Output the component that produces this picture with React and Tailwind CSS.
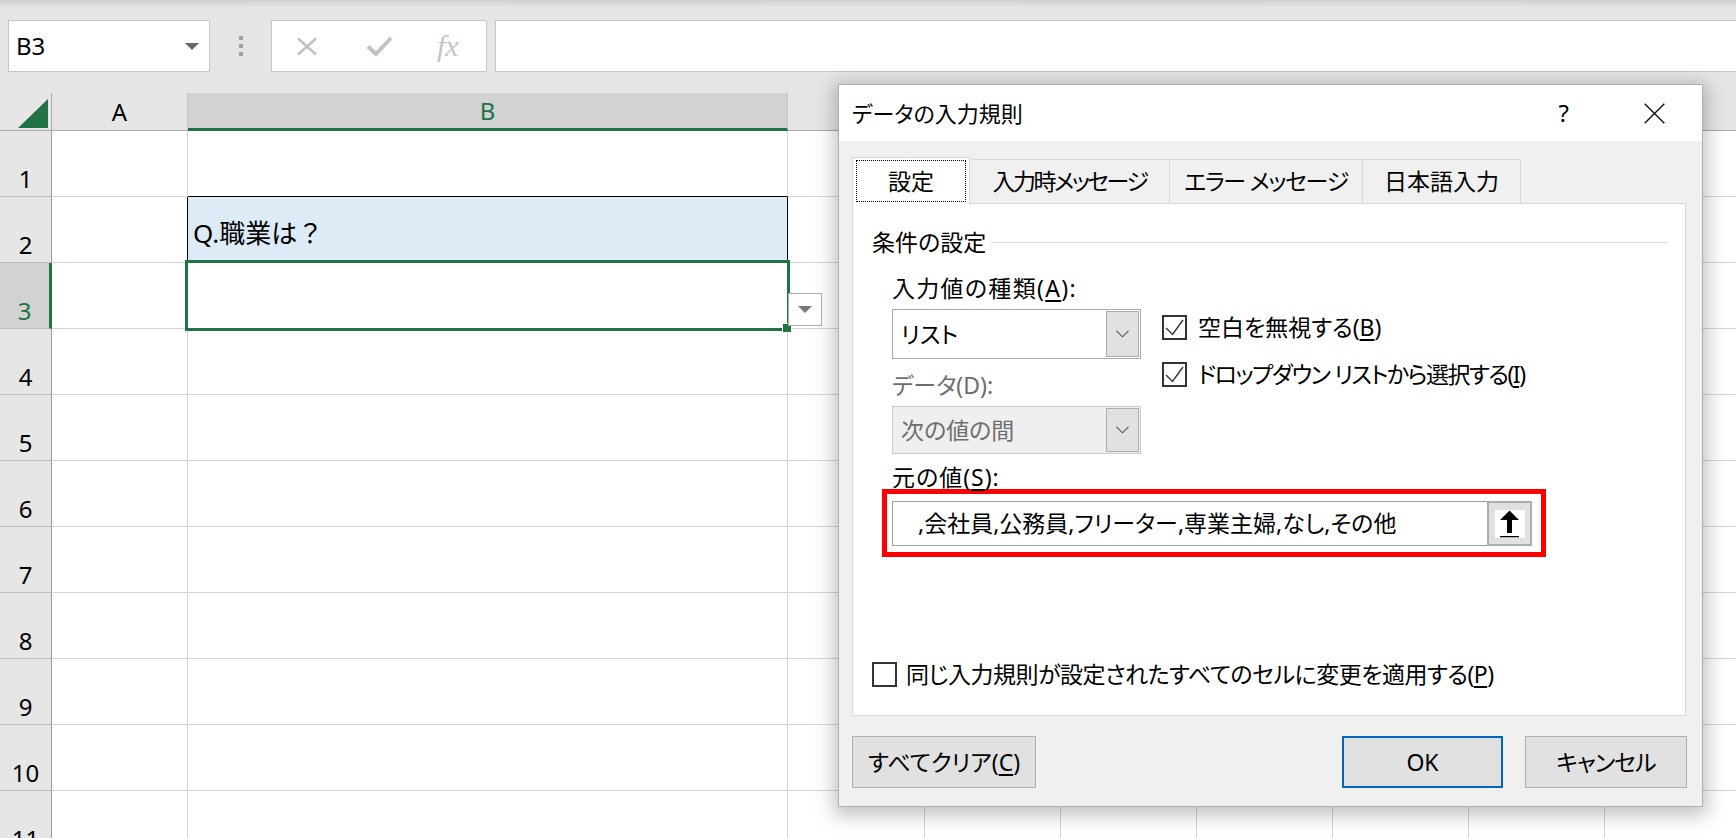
import React from "react";

const colW = ["w-[136px]", "w-[600px]", "w-[137px]", "w-[136px]", "w-[136px]", "w-[136px]", "w-[136px]", "w-[136px]", "w-[136px]"];
// only A and B headers are visible; the rest sit behind the dialog
const colNames = ["A", "B", "", "", "", "", "", "", ""];

function Chevron() {
  return (
    <svg width="13" height="8" viewBox="0 0 13 8">
      <path d="M0.5 0.8 L6.5 6.8 L12.5 0.8" fill="none" stroke="#555" strokeWidth="1.1" />
    </svg>
  );
}

function Combo({ text, disabled }) {
  return (
    <div
      className={`h-full flex items-center border p-px pl-[8px] ${
        disabled ? "border-[#cccccc] bg-[#efefef] text-[#6d6d6d]" : "border-[#a9a9a9] bg-white text-black"
      }`}
    >
      <span className="flex-1 leading-none">{text}</span>
      <div className="w-[33px] h-full bg-[#e1e1e1] border border-[#adadad] flex items-center justify-center">
        <Chevron />
      </div>
    </div>
  );
}

function CheckBox({ checked }) {
  return (
    <div className="w-[25px] h-[25px] shrink-0 border-2 border-[#333333] bg-white">
      {checked && (
        <svg width="21" height="21" viewBox="0 0 21 21">
          <path d="M2 11 L8.5 17.5 L19 3" fill="none" stroke="#333" strokeWidth="1.4" />
        </svg>
      )}
    </div>
  );
}

function Cell({ row, col }) {
  if (row === 1 && col === 1) {
    return <div className={`${colW[col]} shrink-0 border-r border-r-[#d4d4d4] border-b border-b-black bg-white`} />;
  }
  if (row === 2 && col === 0) {
    return <div className={`${colW[col]} shrink-0 border-r border-r-black border-b border-b-[#d4d4d4] bg-white`} />;
  }
  if (row === 2 && col === 1) {
    return (
      <div className={`${colW[col]} shrink-0 border-r border-r-black border-b border-b-[#d4d4d4] bg-[#ddebf7] flex items-end pl-[5px] pb-[16px] text-[26px] leading-none`}>
        Q.職業は？
      </div>
    );
  }
  if (row === 3 && col === 1) {
    return (
      <div className={`${colW[col]} shrink-0 border-r border-b border-[#d4d4d4] bg-white relative`}>
        <div className="absolute -left-[3px] -top-[3px] w-[605px] h-[71px] border-[3px] border-[#217346] pointer-events-none" />
        <div className="absolute left-[594px] top-[60px] w-[10px] h-[10px] bg-[#217346] border border-white" />
        <div className="absolute left-[600px] top-[30px] w-[34px] h-[33px] bg-white border border-[#ababab] flex items-center justify-center z-10">
          <svg width="14" height="7" viewBox="0 0 14 7">
            <polygon points="0,0 14,0 7,7" fill="#777777" />
          </svg>
        </div>
      </div>
    );
  }
  return <div className={`${colW[col]} shrink-0 border-r border-b border-[#d4d4d4] bg-white`} />;
}

export default function App() {
  return (
    <div className="relative w-[1736px] h-[838px] overflow-hidden bg-white text-black font-['Noto_Sans','Noto_Sans_CJK_JP',sans-serif]">
      {/* formula bar */}
      <div className="h-[93px] bg-[#e6e6e6]">
        <div className="h-[7px] bg-linear-to-b from-[#cfcfcf] to-[#e3e3e3]" />
        <div className="mt-[13px] h-[52px] flex">
          <div className="ml-[8px] w-[202px] h-full bg-white border border-[#c6c6c6] flex items-center pl-[7px] pr-[10px] text-[24px]">
            <span className="flex-1 leading-none">B3</span>
            <svg width="14" height="7" viewBox="0 0 14 7">
              <polygon points="0,0 14,0 7,7" fill="#6b6b6b" />
            </svg>
          </div>
          <div className="w-[61px] flex flex-col items-center justify-center gap-[4px]">
            <div className="w-[4px] h-[4px] bg-[#a0a0a0]" />
            <div className="w-[4px] h-[4px] bg-[#a0a0a0]" />
            <div className="w-[4px] h-[4px] bg-[#a0a0a0]" />
          </div>
          <div className="w-[216px] h-full bg-white border border-[#c6c6c6] flex items-center pl-[24px]">
            <svg width="22" height="19" viewBox="0 0 22 19">
              <path d="M2 1.5 L20 17.5 M20 1.5 L2 17.5" stroke="#c2c2c2" strokeWidth="2.6" />
            </svg>
            <svg className="ml-[48px]" width="27" height="22" viewBox="0 0 27 22">
              <path d="M2 11.5 L10 19 L25 3" fill="none" stroke="#c2c2c2" strokeWidth="4" />
            </svg>
            <span className="ml-[44px] text-[30px] leading-none italic text-[#c4c4c4] font-['Liberation_Serif',serif]">fx</span>
          </div>
          <div className="ml-[8px] flex-1 h-full bg-white border border-r-0 border-[#c6c6c6]" />
        </div>
      </div>

      {/* column headers */}
      <div className="flex h-[38px]">
        <div className="w-[52px] shrink-0 bg-[#e6e6e6] border-r border-b border-[#ababab] flex items-end justify-end pr-[3px] pb-[2px]">
          <svg width="30" height="29" viewBox="0 0 30 29">
            <polygon points="30,0 30,29 0,29" fill="#217346" />
          </svg>
        </div>
        {colNames.map((c, i) => (
          <div
            key={i}
            className={`${colW[i]} shrink-0 flex items-center justify-center text-[24px] leading-none border-r border-r-[#c4c4c4] ${
              i === 1
                ? "bg-[#d2d2d2] text-[#217346] border-b-[3px] border-b-[#217346]"
                : "bg-[#e6e6e6] border-b border-b-[#ababab]"
            }`}
          >
            {c}
          </div>
        ))}
      </div>

      {/* rows */}
      {Array.from({ length: 11 }, (_, r) => {
        const n = r + 1;
        return (
          <div key={n} className="flex h-[66px]">
            <div
              className={`w-[52px] shrink-0 flex items-end justify-center pb-[5px] text-[24px] leading-none border-b border-b-[#bdbdbd] ${
                n === 3
                  ? "bg-[#d2d2d2] text-[#217346] border-r-[3px] border-r-[#217346]"
                  : "bg-[#e6e6e6] border-r border-r-[#9b9b9b]"
              }`}
            >
              {n}
            </div>
            {colW.map((w, i) => (
              <Cell key={i} row={n} col={i} />
            ))}
          </div>
        );
      })}

      {/* dialog window */}
      <div className="absolute left-[838px] top-[84px] w-[865px] h-[723px] flex flex-col border border-[#b0b0b0] bg-[#f0f0f0] shadow-[0_4px_18px_4px_rgba(0,0,0,0.25)] text-[23px] [font-feature-settings:'palt']">
        <div className="h-[56px] shrink-0 bg-white flex items-center pl-[13px]">
          <span className="leading-none text-[22px]">データの入力規則</span>
          <span className="ml-auto text-[24px] leading-none">?</span>
          <svg className="ml-[75px] mr-[37px]" width="21" height="21" viewBox="0 0 21 21">
            <path d="M0.7 0.7 L20.3 20.3 M20.3 0.7 L0.7 20.3" stroke="#111" strokeWidth="1.4" />
          </svg>
        </div>

        <div className="flex-1 pl-[13px] pt-[16px]">
          {/* tabs */}
          <div className="flex items-end h-[47px]">
            <div className="relative z-10 w-[118px] h-[47px] bg-white border border-b-0 border-[#d9d9d9] flex items-center justify-center">
              <div className="absolute left-[3px] right-[3px] top-[2px] bottom-[2px] border border-dotted border-black" />
              <span className="leading-none">設定</span>
            </div>
            <div className="w-[200px] h-[44px] mb-px border border-l-0 border-b-0 border-[#d9d9d9] flex items-center justify-center">
              <span className="leading-none tracking-[-2.5px]">入力時メッセージ</span>
            </div>
            <div className="w-[193px] h-[44px] mb-px border border-l-0 border-b-0 border-[#d9d9d9] flex items-center justify-center">
              <span className="leading-none tracking-[-1.3px]">エラー メッセージ</span>
            </div>
            <div className="w-[158px] h-[44px] mb-px border border-l-0 border-b-0 border-[#d9d9d9] flex items-center justify-center">
              <span className="leading-none">日本語入力</span>
            </div>
          </div>

          {/* panel */}
          <div className="-mt-px w-[834px] h-[513px] bg-white border border-[#d9d9d9] pt-[24px] pl-[19px] pr-[17px]">
            <div className="h-[28px] flex items-center">
              <span className="leading-none">条件の設定</span>
              <div className="ml-[5px] flex-1 h-px bg-[#dcdcdc]" />
            </div>

            <div className="pl-[20px] mt-[18px]">
              <div className="flex">
                <div className="w-[249px] shrink-0">
                  <div className="h-[28px] flex items-center leading-none tracking-[1.3px]">
                    入力値の種類(<u className="underline-offset-[3px]">A</u>):
                  </div>
                  <div className="mt-[7px] h-[50px]">
                    <Combo text="リスト" />
                  </div>
                  <div className="mt-[12px] h-[28px] flex items-center leading-none text-[#6d6d6d]">データ(D):</div>
                  <div className="mt-[7px] h-[48px]">
                    <Combo text="次の値の間" disabled />
                  </div>
                  <div className="mt-[12px] h-[23px] flex items-center leading-none tracking-[1px]">
                    元の値(<u className="underline-offset-[3px]">S</u>):
                  </div>
                </div>
                <div className="ml-[21px] pt-[41px]">
                  <div className="h-[25px] flex items-center">
                    <CheckBox checked />
                    <span className="ml-[11px] leading-none">
                      空白を無視する(<u className="underline-offset-[3px]">B</u>)
                    </span>
                  </div>
                  <div className="mt-[22px] h-[25px] flex items-center">
                    <CheckBox checked />
                    <span className="ml-[11px] leading-none tracking-[-1.5px]">
                      ドロップダウン リストから選択する(<u className="underline-offset-[3px]">I</u>)
                    </span>
                  </div>
                </div>
              </div>

              <div className="-ml-[10px] w-[664px] h-[68px] border-[5px] border-[#ff0000] pt-[7px] pl-[5px]">
                <div className="w-[640px] h-[45px] bg-white border border-[#a0a0a0] flex items-center pl-[25px]">
                  <span className="flex-1 leading-none">,会社員,公務員,フリーター,専業主婦,なし,その他</span>
                  <div className="-my-px -mr-px w-[45px] h-[45px] shrink-0 bg-[#e1e1e1] border-2 border-[#adadad] flex items-center justify-center">
                    <div className="w-[30px] h-[28px] bg-white">
                      <svg width="30" height="28" viewBox="0 0 30 28">
                        <polygon points="14.5,0.5 24,10 17,10 17,23 12,23 12,10 5,10" fill="#000" />
                        <rect x="5" y="26" width="19" height="1.3" fill="#000" />
                      </svg>
                    </div>
                  </div>
                </div>
              </div>
            </div>

            <div className="mt-[105px] h-[25px] flex items-center">
              <CheckBox />
              <span className="ml-[9px] leading-none tracking-[-0.5px]">
                同じ入力規則が設定されたすべてのセルに変更を適用する(<u className="underline-offset-[3px]">P</u>)
              </span>
            </div>
          </div>

          {/* buttons */}
          <div className="mt-[20px] w-[835px] h-[52px] flex">
            <div className="w-[184px] h-full bg-[#e1e1e1] border border-[#adadad] flex items-center justify-center">
              <span className="leading-none">
                すべてクリア(<u className="underline-offset-[3px]">C</u>)
              </span>
            </div>
            <div className="ml-auto w-[161px] h-full bg-[#e1e1e1] border-2 border-[#0067c0] flex items-center justify-center">
              <span className="leading-none">OK</span>
            </div>
            <div className="ml-[22px] w-[162px] h-full bg-[#e1e1e1] border border-[#adadad] flex items-center justify-center">
              <span className="leading-none tracking-[-1px]">キャンセル</span>
            </div>
          </div>
        </div>
      </div>
    </div>
  );
}
